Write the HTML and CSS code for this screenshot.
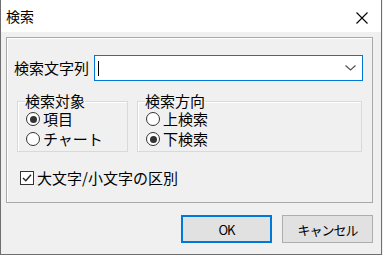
FILE: index.html
```html
<!DOCTYPE html>
<html lang="ja">
<head>
  <meta charset="UTF-8">
  <title>検索</title>
  <link rel="stylesheet" href="styles.css">
</head>
<body>
  <div class="window">
    <div class="titlebar">
      <span class="title">検索</span>
      <span class="close">
        <svg width="12" height="12" viewBox="0 0 12 12"><path d="M0.5 0.5 L11.5 11.5 M11.5 0.5 L0.5 11.5" stroke="#000" stroke-width="1.1" fill="none"/></svg>
      </span>
    </div>
    <div class="content">
      <div class="group">
        <div class="find-row">
          <span class="label">検索文字列</span>
          <div class="combo">
            <span class="caret"></span>
            <svg class="chevron" width="11" height="6" viewBox="0 0 11 6"><path d="M0.5 0.5 L5.5 5 L10.5 0.5" stroke="#555" stroke-width="1.2" fill="none"/></svg>
          </div>
        </div>
        <div class="options">
          <fieldset class="sub target">
            <legend>検索対象</legend>
            <div class="radio-row"><span class="radio on"></span>項目</div>
            <div class="radio-row"><span class="radio"></span>チャート</div>
          </fieldset>
          <fieldset class="sub direction">
            <legend>検索方向</legend>
            <div class="radio-row"><span class="radio"></span>上検索</div>
            <div class="radio-row"><span class="radio on"></span>下検索</div>
          </fieldset>
        </div>
        <div class="check-row">
          <span class="checkbox">
            <svg width="12" height="12" viewBox="0 0 12 12"><path d="M2 6 L4.8 8.8 L10 2.8" stroke="#222" stroke-width="1.4" fill="none"/></svg>
          </span>
          大文字/小文字の区別
        </div>
      </div>
      <div class="buttons">
        <button class="btn default">OK</button>
        <button class="btn">キャンセル</button>
      </div>
    </div>
  </div>
</body>
</html>
```
FILE: styles.css
```css
body {
  margin: 0;
  font-family: "Noto Sans CJK JP", "Noto Sans", sans-serif;
  color: #000;
  background: #f0f0f0;
}

.window {
  width: 382px;
  height: 255px;
  box-sizing: border-box;
  border: 1px solid #6f6f6f;
  border-top: none;
  background: #f0f0f0;
  display: flex;
  flex-direction: column;
}

.titlebar {
  height: 32px;
  background: #fff;
  display: flex;
  align-items: center;
  justify-content: space-between;
  padding: 0 13px 0 5px;
  flex-shrink: 0;
}
.title {
  font-size: 14px;
  line-height: 16px;
}
.close {
  display: flex;
  margin-top: 3px;
}

.content {
  padding: 5px 8px 0 5px;
}

.group {
  border: 1px solid #a8a8a8;
  box-shadow: inset 1px 1px 0 #fff;
  height: 166px;
  box-sizing: border-box;
  padding: 17px 9px 0 7px;
  font-size: 15px;
}

.find-row {
  display: flex;
  align-items: center;
  gap: 5px;
}
.label {
  line-height: 18px;
}
.combo {
  flex: 1;
  height: 26px;
  box-sizing: border-box;
  border: 1px solid #0078d7;
  background: #fff;
  display: flex;
  align-items: center;
  justify-content: space-between;
  padding: 0 6px 0 3px;
}
.caret {
  width: 1px;
  height: 15px;
  background: #000;
}

.options {
  display: flex;
  gap: 9px;
  margin-top: 12px;
  padding-left: 3px;
}
.sub {
  margin: 0;
  border: 1px solid #d9d9d9;
  box-shadow: inset 1px 1px 0 #fff;
  padding: 0 0 2px 7px;
  min-width: 0;
}
.sub legend {
  padding: 0;
  line-height: 16px;
}
.target {
  width: 111px;
  box-sizing: border-box;
}
.direction {
  width: 225px;
  box-sizing: border-box;
}

.radio-row {
  display: flex;
  align-items: center;
  height: 20px;
  line-height: 16px;
  gap: 3px;
}
.radio {
  width: 14px;
  height: 14px;
  box-sizing: border-box;
  border: 1px solid #333;
  border-radius: 50%;
  background: #fff;
  display: flex;
  align-items: center;
  justify-content: center;
  margin-left: 1px;
}
.radio.on::after {
  content: "";
  width: 7px;
  height: 7px;
  border-radius: 50%;
  background: #333;
}

.check-row {
  display: flex;
  align-items: center;
  height: 20px;
  line-height: 16px;
  margin-top: 16px;
  padding-left: 6px;
  gap: 3px;
}
.checkbox {
  width: 14px;
  height: 14px;
  box-sizing: border-box;
  border: 1px solid #333;
  background: #fff;
  display: flex;
  align-items: center;
  justify-content: center;
}

.buttons {
  display: flex;
  justify-content: flex-end;
  gap: 10px;
  margin-top: 12px;
  padding-right: 0;
}
.btn {
  width: 91px;
  height: 28px;
  box-sizing: border-box;
  background: #e1e1e1;
  border: 1px solid #adadad;
  font-family: "Noto Sans CJK JP", sans-serif;
  font-size: 13px;
  letter-spacing: -1px;
  color: #000;
  padding: 0;
}
.btn.default {
  border: 2px solid #0078d7;
}
```
